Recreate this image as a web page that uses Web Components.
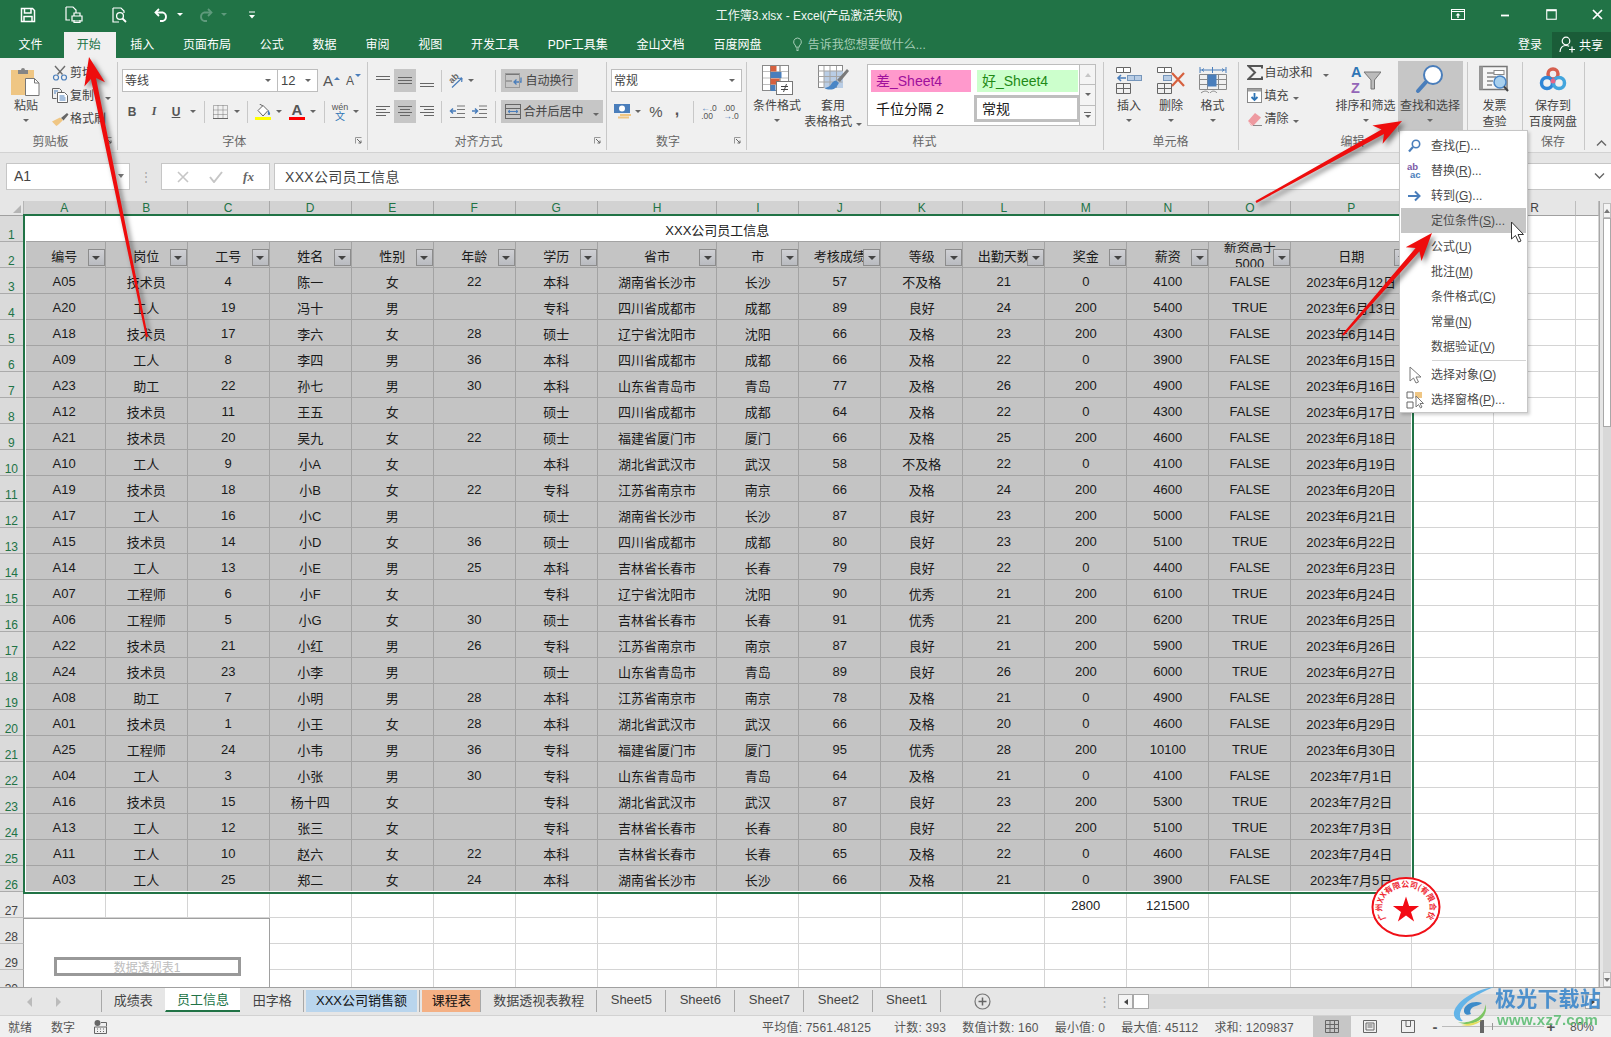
<!DOCTYPE html>
<html lang="zh-CN">
<head>
<meta charset="utf-8">
<title>工作簿3.xlsx - Excel</title>
<style>
  html, body { margin: 0; padding: 0; width: 1611px; height: 1037px; overflow: hidden; background: #f0f0f0; }
  body { font-family: "Liberation Sans", "Noto Sans CJK SC", sans-serif; font-size: 12px; color: #444; position: relative; }
</style>
</head>
<body>
<xl-titlebar></xl-titlebar>
<xl-tabs></xl-tabs>
<xl-ribbon></xl-ribbon>
<xl-formula></xl-formula>
<xl-sheet></xl-sheet>
<xl-sheettabs></xl-sheettabs>
<xl-status></xl-status>
<xl-stamp></xl-stamp>
<xl-menu></xl-menu>
<xl-watermark></xl-watermark>
<xl-arrows></xl-arrows>

<script>
const S = (w, h, b) => `<svg width="${w}" height="${h}" viewBox="0 0 ${w} ${h}" fill="none" style="display:block">${b}</svg>`;

const line = (x1, y1, x2, y2, c = "#666", sw = 1) => `<path d="M${x1} ${y1}L${x2} ${y2}" stroke="${c}" stroke-width="${sw}"/>`;
const hlines = (ys, c = "#666") => S(16, 16, ys.map(([y, a, b]) => line(a, y + .5, b, y + .5, c)).join(""));

const Icons = {
  save: S(16, 16, `<path d="M1.5 1.5h11l2 2v11h-13z" stroke="#fff" stroke-width="1.5"/><path d="M4.5 2v4h6.5V2M4 14.5V9.5h8v5" stroke="#fff" stroke-width="1.5"/>`),
  touch: S(18, 17, `<path d="M1 1h7l3 3v3M1 1v13h4" stroke="#fff" stroke-width="1.2"/><path d="M7 10h10v5H7zM9 10V7h6v3M9 14v2.5h6V14" stroke="#fff" stroke-width="1.2"/>`),
  preview: S(16, 16, `<path d="M1 1h8l3 3v2M1 1v14h6" stroke="#fff" stroke-width="1.2"/><circle cx="8" cy="9" r="3.4" stroke="#fff" stroke-width="1.3"/><path d="M10.5 11.5l3.5 3.5" stroke="#fff" stroke-width="1.8"/>`),
  undo: S(16, 14, `<path d="M5 1L1.5 4.5 5 8" stroke="#fff" stroke-width="1.8"/><path d="M2 4.5h7a4.5 4.5 0 0 1 0 8.5H6" stroke="#fff" stroke-width="1.8"/>`),
  redo: S(16, 14, `<path d="M11 1l3.5 3.5L11 8" stroke="#5f9a7c" stroke-width="1.8"/><path d="M14 4.5H7a4.5 4.5 0 0 0 0 8.5h3" stroke="#5f9a7c" stroke-width="1.8"/>`),
  custom: S(8, 8, `<path d="M1 1h6" stroke="#fff"/><path d="M1 4h6L4 7.500z" fill="#fff"/>`),
  ribOpt: S(14, 11, `<rect x=".5" y=".5" width="13" height="10" stroke="#fff"/><path d="M1 2.500h12" stroke="#fff"/><path d="M7 4l2.500 2.500h-5zM6.300 6h1.400v3H6.300z" fill="#fff"/>`),
  min: S(10, 10, `<path d="M1 5.500h8" stroke="#fff" stroke-width="1.8"/>`),
  max: S(11, 11, `<rect x=".75" y=".75" width="9.500" height="9.500" stroke="#fff" stroke-width="1.1"/><path d="M1 1.500h9" stroke="#fff" stroke-width="1.5"/>`),
  close: S(11, 11, `<path d="M1 1l9 9M10 1l-9 9" stroke="#fff" stroke-width="1.7"/>`),
  bulb: S(11, 14, `<path d="M5.500 1a4 4 0 0 0-2.500 7c.7.7.8 1.200.8 2.200h3.400c0-1 .1-1.500.8-2.200a4 4 0 0 0-2.500-7z" stroke="#a5cdb6"/><path d="M4 12h3M4.500 13.500h2" stroke="#a5cdb6"/>`),
  user: S(17, 17, `<circle cx="7" cy="5" r="3.800" stroke="#fff" stroke-width="1.200"/><path d="M1 16c.3-4.500 2.500-6.500 6-6.500 1.300 0 2.300.3 3.200.8" stroke="#fff" stroke-width="1.200"/><path d="M10 13.500h6M13 10.500v6" stroke="#fff" stroke-width="1.200"/>`),
  paste: S(30, 31, `<rect y="5" width="23" height="25" fill="#efc684"/><path d="M7 5h3a2 2 0 0 1 4 0h3v4H7z" fill="#858585"/><path d="M14.500 13.500h9l4.500 4.500v12.500H14.500z" fill="#fff" stroke="#777"/><path d="M23.500 13.500v4.500h4.500" stroke="#777"/>`),
  cut: S(16, 16, `<path d="M5.500 9.500L13 1M10.500 9.500L3 1" stroke="#6d6d6d" stroke-width="1.400"/><circle cx="4" cy="12.500" r="2.500" stroke="#4a7ebb" stroke-width="1.200"/><circle cx="12" cy="12.500" r="2.500" stroke="#4a7ebb" stroke-width="1.200"/>`),
  copy: S(16, 15, `<path d="M.5.5h7l2 2v2M.500.500v10h4" stroke="#666"/><path d="M5.500 4.500h7l3 3v7h-10z" fill="#fff" stroke="#666"/><path d="M7.500 8h5M7.500 10h6M7.500 12h6M2 3h4M2 5h2" stroke="#4a7ebb"/>`),
  brush: S(18, 14, `<path d="M10 6l6-5 1.500 1.500L12.500 8.500z" fill="#666"/><path d="M9 5.500L1 9.500c1.500 1.200 3.500 4 4.500 4.500 1.500-1 4.500-4 6.500-6z" fill="#efc684"/>`),
  border: S(15, 14, `<path d="M.5.5h14v13H.5zM5 .5v13M10 .5v13M.5 5h14M.5 9.500h14" stroke="#777" stroke-dasharray="1 1"/><path d="M0 13.500h15" stroke="#666"/>`),
  fill: S(16, 16, `<path d="M3 6.500L8 1.500l5 5-5 5.500z" fill="#fff" stroke="#666"/><path d="M8 2L4.500 0" stroke="#666"/><path d="M13 6c1.500 2 2.500 3 2 4.500-.8 1-2.500.5-2.200-1z" fill="#4a7ebb"/><rect y="13" width="16" height="3.500" fill="#ff0"/>`),
  orient: S(17, 17, `<text x="0" y="0" transform="translate(5 12) rotate(-45)" font-size="9" font-weight="700" fill="#666" font-family="Liberation Sans">ab</text><path d="M5 15.500L15 6M15 6l-4 .5M15 6l-.3 4" stroke="#4a7ebb" stroke-width="1.200"/>`),
  wrap: S(17, 16, `<path d="M1 1.500h14M1 8h6M1 14.500h6" stroke="#777"/><path d="M16 4.500v4.500h-7M11.500 6.500L9 9l2.500 2.500" stroke="#4a7ebb" stroke-width="1.300"/><rect x=".5" y=".5" width="14" height="14" stroke="#999"/>`),
  merge: S(16, 15, `<rect x=".5" y=".5" width="15" height="14" stroke="#666"/><path d="M1 4.500h14M1 10.500h14" stroke="#666"/><path d="M3 7.500h10M3 7.500l2-1.500M3 7.500l2 1.500M13 7.500l-2-1.500M13 7.500l-2 1.500" stroke="#4a7ebb"/>`),
  indentL: S(16, 14, `<path d="M8 1h8M8 4.500h8M8 8.500h8M1 12.500h15" stroke="#777"/><path d="M7 6H1.500M4 3.500L1.500 6 4 8.500" stroke="#4a7ebb" stroke-width="1.500"/>`),
  indentR: S(16, 14, `<path d="M8 1h8M8 4.500h8M8 8.500h8M1 12.500h15" stroke="#777"/><path d="M1 6h5.500M4 3.500L6.500 6 4 8.500" stroke="#4a7ebb" stroke-width="1.500"/>`),
  money: S(17, 17, `<rect y="1" width="16" height="9" fill="#4a7ebb"/><circle cx="8" cy="5.500" r="3" fill="#fff"/><rect x="6" y="11" width="11" height="2" fill="#efc684"/><rect x="4" y="13.500" width="11" height="2" fill="#efc684"/>`),
  cond: S(31, 30, `<rect x=".5" y=".5" width="26" height="25" fill="#fff" stroke="#8a8a8a"/><path d="M8.500 1v25M18 1v25M1 6.500h25M1 13h25M1 19.500h25" stroke="#bdbdbd"/><path d="M.5.5h26v25H.5zM8.500 1v25M18 1v25" stroke="#8a8a8a"/><rect x="8.500" y="1" width="6" height="5.500" fill="#d6603e"/><rect x="8.500" y="7" width="11" height="6" fill="#4a7ebb"/><rect x="8.500" y="13.500" width="9" height="6" fill="#d6603e"/><rect x="8.500" y="20" width="5" height="6" fill="#4a7ebb"/><rect x="14.500" y="16.500" width="16" height="13" fill="#fff" stroke="#777"/><path d="M19 21.500h7M19 24.500h7M24.500 19l-3 8" stroke="#444"/>`),
  table: S(31, 30, `<rect x=".5" y=".5" width="24" height="22" fill="#fff" stroke="#888"/><rect x="6" y="6" width="19" height="17" fill="#b9cde5"/><path d="M.5 6h24M.5 11.500h24M.5 17h24M6 1v22M12 1v22M18.500 1v22" stroke="#a5a5a5"/><path d="M29 4l2 2-9 11-3-2z" fill="#7a7a7a"/><path d="M18 15.500c-2.500.5-4 2-5 4-1 2-3.500 3-6.500 3.500 3 2.500 10 2 12-1 1.200-2 2-3.500 2.500-4z" fill="#4a86c6"/>`),
  insert: S(28, 28, `<path d="M1.500 1.500h7v5h-7zM8.500 1.500h7v5h-7z" fill="#fff" stroke="#666"/><rect x="12.500" y="9.500" width="7" height="5" fill="#b9cde5" stroke="#7696bb"/><rect x="19.500" y="9.500" width="7" height="5" fill="#b9cde5" stroke="#7696bb"/><path d="M11 12H3M6 9l-3 3 3 3" stroke="#4a7ebb" stroke-width="1.600"/><path d="M1.500 17.500h14v10h-14zM1.500 22.500h14M8.500 17.500v10" stroke="#666"/>`),
  del: S(30, 28, `<path d="M1.500 1.500h7v5h-7zM8.500 1.500h7v5h-7z" fill="#fff" stroke="#666"/><rect x="7.500" y="9.500" width="8" height="5" fill="#b9cde5" stroke="#7696bb"/><path d="M1.500 17.500h14v10h-14zM1.500 22.500h14M8.500 17.500v10" stroke="#666"/><path d="M16 7l12 13M28 7L16 20" stroke="#d6603e" stroke-width="2.200"/>`),
  format: S(28, 28, `<path d="M1 4h26M1 1v6M27 1v6M13.500 1v6" stroke="#4a7ebb"/><path d="M3 4l2-1.500M3 4l2 1.500M25 4l-2-1.500M25 4l-2 1.500" stroke="#4a7ebb"/><path d="M.5 8.500h27v15H.5zM8.500 8.500v15M19.500 8.500v15M.5 13.500h27M.5 18.500h27" stroke="#8a8a8a"/><rect x="8.500" y="8.500" width="9" height="12" fill="#4a7ebb"/><path d="M2 27c3-2.500 6-2.500 8 0M11 27c2-2.500 5-2.500 7 0" stroke="#888"/>`),
  sigma: S(16, 15, `<path d="M15 3.500V1H1.500l6.500 6.500L1.500 14H15v-2.500" stroke="#555" stroke-width="2"/>`),
  down: S(15, 15, `<rect x=".5" y=".5" width="14" height="14" fill="#fff" stroke="#888"/><rect x="1" y="1" width="13" height="2.500" fill="#a0a0a0"/><path d="M7.500 5v7M4.500 9l3 3 3-3" stroke="#2f75b5" stroke-width="1.800"/>`),
  eraser: S(15, 14, `<path d="M1 9l7-8 6 4.500-7.500 8H4z" fill="#ee9aa0"/><path d="M1 9l4.500 4.500" stroke="#f5c4c8"/><path d="M6 13.500h9" stroke="#888"/>`),
  sort: S(30, 30, `<text x="0" y="12" font-size="14.500" font-weight="700" fill="#2f75b5" font-family="Liberation Sans">A</text><text x="0" y="28" font-size="14.500" font-weight="700" fill="#9466b8" font-family="Liberation Sans">Z</text><path d="M13 7h17l-6.500 8v9h-3.500v-9z" fill="#bbb" stroke="#777"/>`),
  find: S(30, 30, `<circle cx="18" cy="10" r="9" fill="#fff" stroke="#4a7ebb" stroke-width="2"/><path d="M11 17L3 26" stroke="#4a7ebb" stroke-width="4" stroke-linecap="round"/>`),
  invoice: S(32, 30, `<rect x="1" y="1.500" width="27" height="23" fill="#f6f6f6" stroke="#777" stroke-width="1.500"/><path d="M1 1.500h3v23H1z" fill="#999"/><path d="M8 8h15M8 12h9M8 16h6M8 20h5" stroke="#888" stroke-width="1.300"/><rect x="15" y="5.500" width="10" height="4" fill="#fff" stroke="#888"/><circle cx="21" cy="17" r="6" fill="#a8d0ee" stroke="#4a86c6" stroke-width="1.500"/><path d="M25 21.500l4 4.500" stroke="#444" stroke-width="2"/>`),
  baidu: S(28, 26, `<circle cx="14" cy="7" r="5" stroke="#d6604f" stroke-width="3.500"/><circle cx="8" cy="16" r="5.500" stroke="#2f86d6" stroke-width="3.500"/><circle cx="20" cy="16" r="5.500" stroke="#43a5dd" stroke-width="3.500"/><circle cx="14" cy="14" r="2.500" fill="#e6688a"/>`),
  mSearch: S(15, 14, `<circle cx="9" cy="5" r="3.700" stroke="#4a7ebb" stroke-width="1.600"/><path d="M6 8L2 12.500" stroke="#4a7ebb" stroke-width="2.200"/>`),
  mGoto: S(15, 12, `<path d="M1 6h11M8 1.500L12.500 6 8 10.500" stroke="#4a7ebb" stroke-width="2"/>`),
  mPointer: S(14, 18, `<path d="M2 1v14l3.500-3 2.500 5 2.500-1-2.500-5h5z" fill="#fff" stroke="#777"/>`),
  mPane: S(18, 18, `<path d="M1 1h6v6H1zM1 11h6v6H1z" stroke="#666"/><rect x="9" y="1" width="7" height="6" fill="#efc684"/><path d="M10 5v11l2.500-2.500 2 3.500 1.500-1-2-3.500h3.500z" fill="#fff" stroke="#777"/>`),
  nextTab: S(6, 10, `<path d="M1 0l5 5-5 5z" fill="#bbb"/>`),
  prevTab: S(6, 10, `<path d="M5 0L0 5l5 5z" fill="#bbb"/>`),
  plus: S(17, 17, `<circle cx="8.500" cy="8.500" r="7.500" stroke="#777" stroke-width="1.200"/><path d="M4.500 8.500h8M8.500 4.500v8" stroke="#666" stroke-width="1.500"/>`),
  macro: S(13, 14, `<circle cx="3.500" cy="3" r="3" fill="#666"/><path d="M.5 7h12v6.500H.500zM7 2.500h5.500v4" stroke="#666"/><path d="M3 9h1M6 9h1M9 9h1M3 11.500h1M6 11.500h1M9 11.500h1" stroke="#666"/>`),
  vNormal: S(14, 13, `<path d="M.5.5h13v12H.5zM5 .5v12M9.500 .5v12M.5 4.500h13M.5 8.500h13" stroke="#666"/>`),
  vPage: S(14, 13, `<path d="M.5.5h13v12H.5zM3 3h8v7H3zM4.500 5h5M4.500 7h5" stroke="#666"/>`),
  vBreak: S(14, 13, `<path d="M.5.5h13v12H.5zM5 .5v6h4.500V.5" stroke="#666"/>`),
  chevUp: S(11, 6, `<path d="M1 5.500L5.500 1 10 5.500" stroke="#666" stroke-width="1.400"/>`),
  chevDown: S(11, 6, `<path d="M1 .5L5.500 5 10 .5" stroke="#666" stroke-width="1.400"/>`),
  launcher: S(7, 7, `<path d="M.5 6.500V.5h6" stroke="#999"/><path d="M2 2l4 4M6 3.500V6H3.500" stroke="#666"/>`),
};
const Align = {
  top: hlines([[3, 1, 15], [6, 1, 15]]),
  mid: hlines([[4, 1, 15], [7, 1, 15], [10, 1, 15]]),
  bot: hlines([[10, 1, 15], [13, 1, 15]]),
  left: hlines([[2, 1, 15], [5, 1, 11], [8, 1, 15], [11, 1, 11]]),
  center: hlines([[2, 1, 15], [5, 3, 13], [8, 1, 15], [11, 3, 13]]),
  right: hlines([[2, 1, 15], [5, 5, 15], [8, 1, 15], [11, 5, 15]]),
};

class XlTitlebar extends HTMLElement {
  constructor() {
    super();
    this.attachShadow({ mode: "open" }).innerHTML = `
      <style>
        :host { display: grid; grid-template-columns: 1fr auto 1fr; height: 32px; box-sizing: border-box; padding-bottom: 3px; background: #217346; color: #fff; align-items: center; overflow: hidden; }
        .qat, .win { display: flex; align-items: center; }
        .qat span, .win span { display: flex; align-items: center; justify-content: center; }
        .title { font-size: 12px; margin-left: 7px; color: #f2f7f4; }
        .win { justify-content: flex-end; margin-right: -10px; }
        .win span { width: 46.5px; height: 28px; }
        .car { width: 0; height: 0; border: 3px solid transparent; border-top: 3.5px solid #fff; border-bottom: 0; }
        .car.off { border-top-color: #5f9a7c; }
      </style>
      <div class="qat">
        <span style="margin-left:20px">${Icons.save}</span>
        <span style="margin-left:29px">${Icons.touch}</span>
        <span style="margin-left:29px">${Icons.preview}</span>
        <span style="margin-left:26px">${Icons.undo}</span>
        <span style="margin-left:7px"><i class="car"></i></span>
        <span style="margin-left:14px">${Icons.redo}</span>
        <span style="margin-left:8px"><i class="car off"></i></span>
        <span style="margin-left:21px">${Icons.custom}</span>
      </div>
      <div class="title">工作簿3.xlsx - Excel(产品激活失败)</div>
      <div class="win"><span>${Icons.ribOpt}</span><span>${Icons.min}</span><span>${Icons.max}</span><span>${Icons.close}</span></div>`;
  }
}

class XlTabs extends HTMLElement {
  constructor() {
    super();
    const names = ["文件", "开始", "插入", "页面布局", "公式", "数据", "审阅", "视图", "开发工具", "PDF工具集", "金山文档", "百度网盘"];
    this.attachShadow({ mode: "open" }).innerHTML = `
      <style>
        :host { display: flex; height: 26px; background: #217346; color: #fff; font-size: 12px; padding-left: 4px; align-items: stretch; }
        .t { padding: 0 14.4px 3px; display: flex; align-items: center; }
        .on { background: #f0f0f0; color: #217346; margin-left: 7px; padding: 0 15px 3px 13px; }
        .tell { display: flex; align-items: center; gap: 5px; margin-left: 16px; padding-bottom: 3px; color: #a5cdb6; }
        .end { margin-left: auto; display: flex; align-items: stretch; }
        .login { display: flex; align-items: center; margin-right: 10px; padding-bottom: 3px; }
        .share { width: 59px; background: #1a5c38; display: flex; align-items: center; gap: 3px; padding: 0 0 2px 7px; box-sizing: border-box; }
      </style>
      ${names.map((n, i) => `<div class="t ${i == 1 ? "on" : ""}">${n}</div>`).join("")}
      <div class="tell">${Icons.bulb}<span>告诉我您想要做什么...</span></div>
      <div class="end"><div class="login">登录</div><div class="share">${Icons.user}<span>共享</span></div></div>`;
  }
}

class XlGroup extends HTMLElement {
  constructor() {
    super();
    const launch = this.hasAttribute("launch");
    this.attachShadow({ mode: "open" }).innerHTML = `
      <style>
        :host { display: block; flex: none; width: var(--w); height: 88px; box-sizing: border-box; border-right: 1px solid #c8c8c8; }
        .body { height: 70px; display: flex; padding-left: var(--p, 0); box-sizing: border-box; }
        .lab { height: 16px; display: grid; grid-template-columns: 1fr auto 1fr; align-items: center; color: #666; font-size: 12px; }
        .name { padding-right: ${launch ? 16 : 0}px; }
        .lau { justify-self: end; margin-right: 5px; }
      </style>
      <div class="body"><slot></slot></div>
      <div class="lab"><span></span><span class="name">${this.getAttribute("label") || ""}</span>
      <span class="lau">${launch ? Icons.launcher : ""}</span></div>`;
  }
}

const car = `<i class="car"></i>`;
const k = (w, c = "", cls = "") => `<span class="k ${cls}" style="width:${w}px">${c}</span>`;
const sep = w => `<span class="k sep" style="width:${w}px"></span>`;
const big = (w, icon, lines, caret = true) => `<div class="big" style="width:${w}px"><div class="ico">${icon}</div>${lines.map(l => `<div class="t">${l}</div>`).join("")}${caret ? `<div class="bc">${car}</div>` : ""}</div>`;

class XlRibbon extends HTMLElement {
  constructor() {
    super();
    this.attachShadow({ mode: "open" }).innerHTML = `
      <style>
        :host { display: flex; height: 94px; padding-top: 4px; box-sizing: border-box; background: #f0f0f0; color: #444; font-size: 12px; white-space: nowrap; }
        .col { display: flex; flex-direction: column; }
        .r { display: flex; align-items: center; height: 23px; }
        .k { display: inline-flex; align-items: center; justify-content: center; height: 23px; flex: none; }
        .sep { background: linear-gradient(#c8c8c8, #c8c8c8) center / 1px 22px no-repeat; }
        .sel { background: #c6c6c6; }
        .lb { padding-bottom: 2px; }
        .car { display: inline-block; width: 0; height: 0; border: 3px solid transparent; border-top: 3.5px solid #666; border-bottom: 0; }
        .big { display: flex; flex-direction: column; align-items: center; height: 70px; flex: none; }
        .ico { height: 36px; display: flex; align-items: center; justify-content: center; }
        .t { line-height: 16px; height: 16px; }
        .bc { height: 12px; display: flex; align-items: center; }
        .sm { height: 23px; display: flex; align-items: center; }
        .box { background: #fff; border: 1px solid #bdbdbd; box-sizing: border-box; height: 23px; display: flex; align-items: center; justify-content: space-between; padding: 0 6px 0 2px; color: #444; font-size: 12px; }
        .gal { width: 229px; height: 62px; margin: 2px 0 0 4px; display: flex; border: 1px solid #bdbdbd; box-sizing: border-box; background: #fff; font-size: 14px; }
        .cells { width: 211px; display: grid; grid-template-columns: 100px 106px; column-gap: 3px; padding: 5px 0 0 3px; grid-template-rows: 22px 26px; row-gap: 4px; box-sizing: border-box; }
        .cells div { display: flex; align-items: center; padding: 0 0 2px 5px; box-sizing: border-box; }
        .bad { background: #ff99cc; color: #a0109c; }
        .good { background: #ccffcc; color: #1f8a16; margin: 0 2px 0 3px; }
        .normal { border: 3px solid #bfbfbf; color: #222; margin-top: -1px; height: 27px; }
        .comma { color: #111; }
        .scr { flex: 1; display: flex; flex-direction: column; border-left: 1px solid #bdbdbd; background: #f4f4f4; }
        .scr span { flex: 1; display: flex; align-items: center; justify-content: center; border-bottom: 1px solid #bdbdbd; }
        .scr span:last-child { border: 0; }
        .up { width: 0; height: 0; border: 3.5px solid transparent; border-bottom: 4px solid #c6c6c6; border-top: 0; }
        .more { width: 7px; border-top: 1px solid #666; padding-top: 2px; display: flex; justify-content: center; }
        .end { flex: 1; display: flex; align-items: flex-end; justify-content: flex-end; padding: 0 4px 6px 0; }
      </style>

      <xl-group label="剪贴板" launch style="--w:118px;--p:4px">
        ${big(44, Icons.paste, ["粘贴"])}
        <div class="col" style="margin-top:-1px;margin-left:3px">
          <div class="sm">${k(18, Icons.cut)}<span class="lb" style="margin-left:1px">剪切</span></div>
          <div class="sm">${k(18, Icons.copy)}<span class="lb" style="margin-left:1px">复制</span><span style="margin-left:11px">${car}</span></div>
          <div class="sm">${k(18, Icons.brush)}<span class="lb" style="margin-left:1px">格式刷</span></div>
        </div>
      </xl-group>

      <xl-group label="字体" launch style="--w:249.5px;--p:4px">
        <div class="col" style="padding-top:7px;gap:8px">
          <div class="r">
            <div class="box" style="width:156px"><span class="lb">等线</span>${car}</div>
            <div class="box" style="width:41px;margin-left:-1px;padding-left:3px;font-size:13px">12${car}</div>
            ${k(27, `<span style="font-size:15px;color:#555">A</span><sup style="border:3px solid transparent;border-bottom:3.5px solid #4a7ebb;margin:-8px 0 0 1px"></sup>`)}
            ${k(17, `<span style="font-size:12px;color:#555">A</span><sup style="border:3px solid transparent;border-top:3.5px solid #4a7ebb;margin:-8px 0 0 1px"></sup>`)}
          </div>
          <div class="r">
            ${k(20, `<b style="font-size:12px;color:#555">B</b>`)}${k(2)}${k(20, `<i style="font:italic 700 12px 'Liberation Serif',serif;color:#555">I</i>`)}${k(2)}
            ${k(20, `<u style="font-size:12px;font-weight:700;color:#555">U</u>`)}${k(14, car)}${sep(8)}
            ${k(24, Icons.border)}${k(10, car)}${sep(10)}${k(22, Icons.fill)}${k(10, car)}${k(2)}
            ${k(22, `<span style="display:flex;flex-direction:column;align-items:center"><span style="font-size:15px;line-height:13px;color:#555;font-weight:700">A</span><span style="width:16px;height:3.5px;background:#f00;margin-top:1px"></span></span>`)}${k(10, car)}${sep(12)}
            ${k(20, `<span style="display:flex;flex-direction:column;align-items:center;font-size:9px;line-height:9px;color:#555">wén<span style="color:#2f75b5;font-size:10px">文</span></span>`)}${k(12, car)}
          </div>
        </div>
      </xl-group>

      <xl-group label="对齐方式" launch style="--w:239px;--p:4px">
        <div class="col" style="padding-top:7px;gap:8px">
          <div class="r">
            ${k(22, Align.top)}${k(22, Align.mid, "sel")}${k(22, Align.bot)}${sep(8)}${k(20, Icons.orient)}${k(10, car)}${k(14)}${sep(11)}
            <span class="k sel" style="width:77px;justify-content:flex-start;padding-left:4px;box-sizing:border-box;gap:4px">${Icons.wrap}<span class="lb">自动换行</span></span>
          </div>
          <div class="r">
            ${k(22, Align.left)}${k(22, Align.center, "sel")}${k(22, Align.right)}${sep(8)}${k(22, Icons.indentL)}${k(22, Icons.indentR)}${sep(11)}
            <span class="k sel" style="width:102px;justify-content:flex-start;padding-left:4px;box-sizing:border-box;gap:3px">${Icons.merge}<span class="lb">合并后居中</span><span style="margin-left:6px">${car}</span></span>
          </div>
        </div>
      </xl-group>

      <xl-group label="数字" launch style="--w:140px;--p:4.500px">
        <div class="col" style="padding-top:7px;gap:8px">
          <div class="r"><div class="box" style="width:131px"><span class="lb">常规</span>${car}</div></div>
          <div class="r">
            ${k(22, Icons.money)}${k(10, car)}${k(2)}${k(22, `<span style="font-size:15px;color:#555">%</span>`)}${k(20, `<b style="font-size:16px;color:#555;margin-top:-4px">,</b>`)}${sep(12)}
            ${k(20, `<span style="font-size:8.500px;line-height:8px;color:#555"><span style="color:#4a7ebb">←</span>.0<br>.00</span>`)}${k(2)}
            ${k(20, `<span style="font-size:8.500px;line-height:8px;color:#555">.00<br><span style="color:#4a7ebb">→</span>.0</span>`)}
          </div>
        </div>
      </xl-group>

      <xl-group label="样式" style="--w:357px;--p:4.500px">
        ${big(52, Icons.cond, ["条件格式"])}
        ${big(60, Icons.table, ["套用", `表格格式 ${car}`], false)}
        <div class="gal">
          <div class="cells">
            <div class="bad">差_Sheet4</div><div class="good">好_Sheet4</div>
            <div class="comma">千位分隔 2</div><div class="normal">常规</div>
          </div>
          <div class="scr"><span><i class="up"></i></span><span>${car}</span><span><i class="more">${car}</i></span></div>
        </div>
      </xl-group>

      <xl-group label="单元格" style="--w:135px;--p:4.500px">
        ${big(42, Icons.insert, ["插入"])}${big(42, Icons.del, ["删除"])}${big(41, Icons.format, ["格式"])}
      </xl-group>

      <xl-group label="编辑" style="--w:229px;--p:7px">
        <div class="col" style="margin-top:-1px;width:88px">
          <div class="sm">${k(18, Icons.sigma)}<span class="lb" style="margin-left:1px">自动求和</span><span style="margin-left:10px">${car}</span></div>
          <div class="sm">${k(18, Icons.down)}<span class="lb" style="margin-left:1px">填充</span><span style="margin-left:4px">${car}</span></div>
          <div class="sm">${k(18, Icons.eraser)}<span class="lb" style="margin-left:1px">清除</span><span style="margin-left:4px">${car}</span></div>
        </div>
        ${big(64, Icons.sort, ["排序和筛选"])}
        <div class="big sel" style="width:65px;height:71px;margin:-1px 0 0 0"><div class="ico" style="height:37px">${Icons.find}</div><div class="t">查找和选择</div><div class="bc">${car}</div></div>
      </xl-group>

      <xl-group style="--w:55px">${big(54, Icons.invoice, ["发票", "查验"], false)}</xl-group>
      <xl-group label="保存" style="--w:62px">${big(61, Icons.baidu, ["保存到", "百度网盘"], false)}</xl-group>
      <div class="end">${Icons.chevUp}</div>`;
  }
}

class XlFormula extends HTMLElement {
  constructor() {
    super();
    this.attachShadow({ mode: "open" }).innerHTML = `
      <style>
        :host { display: flex; height: 49px; box-sizing: border-box; background: #e6e6e6; border-top: 1px solid #d2d2d2; padding: 10px 0 11px 6px; color: #444; }
        .f { background: #fff; border: 1px solid #c6c6c6; box-sizing: border-box; display: flex; align-items: center; height: 27px; }
        .name { width: 124px; padding: 0 5px 2px 7px; justify-content: space-between; font-size: 14px; }
        .dots { width: 31px; display: flex; justify-content: center; align-items: center; color: #a8a8a8; font-size: 12px; line-height: 4px; }
        .btns { width: 109px; justify-content: space-around; padding: 0 4px; }
        .btns span { width: 24px; text-align: center; display: flex; justify-content: center; }
        .input { flex: 1; margin-left: 4px; padding: 0 6px 2px 10px; font-size: 14px; letter-spacing: .3px; justify-content: space-between; border-right: 0; }
        .car { width: 0; height: 0; border: 3.5px solid transparent; border-top: 4px solid #777; border-bottom: 0; }
      </style>
      <div class="f name"><span>A1</span><i class="car"></i></div>
      <div class="dots"><span>⋮</span></div>
      <div class="f btns">
        <span>${S(12, 12, `<path d="M1 1l10 10M11 1L1 11" stroke="#c6c6c6" stroke-width="1.600"/>`)}</span>
        <span>${S(14, 12, `<path d="M1 6l4 5 8-10" stroke="#c6c6c6" stroke-width="2"/>`)}</span>
        <span style="font:italic 700 13px 'Liberation Serif',serif;color:#666">fx</span>
      </div>
      <div class="f input"><span>XXX公司员工信息</span>${Icons.chevDown}</div>`;
  }
}

const COLW = [23.67, 82, 82, 82, 82, 82, 82, 82, 119.67, 82, 82, 82, 82, 82, 82, 82, 120.67, 82, 82, 23];
const LETTERS = "ABCDEFGHIJKLMNOPQR ".split("");
const HEAD = ["编号", "岗位", "工号", "姓名", "性别", "年龄", "学历", "省市", "市", "考核成绩", "等级", "出勤天数", "奖金", "薪资", "薪资高于<br>5000", "日期"];
const DATA = `A05 技术员 4 陈一 女 22 本科 湖南省长沙市 长沙 57 不及格 21 0 4100 FALSE
A20 工人 19 冯十 男 - 专科 四川省成都市 成都 89 良好 24 200 5400 TRUE
A18 技术员 17 李六 女 28 硕士 辽宁省沈阳市 沈阳 66 及格 23 200 4300 FALSE
A09 工人 8 李四 男 36 本科 四川省成都市 成都 66 及格 22 0 3900 FALSE
A23 助工 22 孙七 男 30 本科 山东省青岛市 青岛 77 及格 26 200 4900 FALSE
A12 技术员 11 王五 女 - 硕士 四川省成都市 成都 64 及格 22 0 4300 FALSE
A21 技术员 20 吴九 女 22 硕士 福建省厦门市 厦门 66 及格 25 200 4600 FALSE
A10 工人 9 小A 女 - 本科 湖北省武汉市 武汉 58 不及格 22 0 4100 FALSE
A19 技术员 18 小B 女 22 专科 江苏省南京市 南京 66 及格 24 200 4600 FALSE
A17 工人 16 小C 男 - 硕士 湖南省长沙市 长沙 87 良好 23 200 5000 FALSE
A15 技术员 14 小D 女 36 硕士 四川省成都市 成都 80 良好 23 200 5100 TRUE
A14 工人 13 小E 男 25 本科 吉林省长春市 长春 79 良好 22 0 4400 FALSE
A07 工程师 6 小F 女 - 专科 辽宁省沈阳市 沈阳 90 优秀 21 200 6100 TRUE
A06 工程师 5 小G 女 30 硕士 吉林省长春市 长春 91 优秀 21 200 6200 TRUE
A22 技术员 21 小红 男 26 专科 江苏省南京市 南京 87 良好 21 200 5900 TRUE
A24 技术员 23 小李 男 - 硕士 山东省青岛市 青岛 89 良好 26 200 6000 TRUE
A08 助工 7 小明 男 28 本科 江苏省南京市 南京 78 及格 21 0 4900 FALSE
A01 技术员 1 小王 女 28 本科 湖北省武汉市 武汉 66 及格 20 0 4600 FALSE
A25 工程师 24 小韦 男 36 专科 福建省厦门市 厦门 95 优秀 28 200 10100 TRUE
A04 工人 3 小张 男 30 专科 山东省青岛市 青岛 64 及格 21 0 4100 FALSE
A16 技术员 15 杨十四 女 - 专科 湖北省武汉市 武汉 87 良好 23 200 5300 TRUE
A13 工人 12 张三 女 - 专科 吉林省长春市 长春 80 良好 22 200 5100 TRUE
A11 工人 10 赵六 女 22 本科 吉林省长春市 长春 65 及格 22 0 4600 FALSE
A03 工人 25 郑二 女 24 本科 湖南省长沙市 长沙 66 及格 21 0 3900 FALSE`.split("\n").map(r => r.split(" ").map(v => v == "-" ? "" : v));

class XlSheet extends HTMLElement {
  constructor() {
    super();
    // every cell gets its own grid line, the selection frame and the pivot box share those tracks
    const at = (r, c, span = 1) => `grid-row:${r + 1};grid-column:${c + 2} / span ${span}`;
    let h = `<div class="corner" style="grid-row:1;grid-column:1"><i></i></div>`;
    LETTERS.forEach((l, i) => h += `<div class="ch ${i < 16 ? "on" : ""}" style="${at(0, i)}">${l}</div>`);

    for (let r = 1; r <= 30; r++) {
      h += `<div class="rh ${r <= 26 ? "on" : ""}" style="grid-row:${r + 1};grid-column:1">${r}</div>`;
      if (r == 1) {
        h += `<div class="c" style="${at(r, 0, 16)};border-color:#a3a3a3">XXX公司员工信息</div>`;
        for (let i = 16; i < 19; i++) h += `<div class="c" style="${at(r, i)}"></div>`;
        continue;
      }
      for (let i = 0; i < 19; i++) {
        if (r >= 28 && i < 3) continue;
        let v = "", on = r <= 26 && i < 16, extra = "";
        if (r == 2 && i < 16) {
          v = HEAD[i];
          if (i == 14) v = `<span class="wrap">${v}</span>`;
          extra = `<b class="fb"><i></i></b>`;
        } else if (r >= 3 && r <= 26 && i < 16) {
          const d = r - 3;
          v = i == 15 ? (d < 19 ? `2023年6月${12 + d}日` : `2023年7月${d - 18}日`) : DATA[d][i];
        } else if (r == 27 && i == 12) v = "2800";
        else if (r == 27 && i == 13) v = "121500";
        h += `<div class="c ${on ? "s" : ""}" style="${at(r, i)}">${v}${extra}</div>`;
      }
    }

    this.attachShadow({ mode: "open" }).innerHTML = `
      <style>
        :host { display: flex; height: 786px; overflow: hidden; background: #e6e6e6; }
        .grid { width: 1599px; height: 786px; overflow: hidden; display: grid; grid-template-columns: ${COLW.map(w => w + "px").join(" ")}; grid-template-rows: 15.33px repeat(30, 26px); background: #fff; font-size: 13px; color: #222; border-right: 1px solid #a8a8a8; box-sizing: content-box; }
        .corner { background: #e6e6e6; border-right: 1px solid #b5b5b5; border-bottom: 1px solid #a0a0a0; box-sizing: border-box; display: flex; align-items: flex-end; justify-content: flex-end; padding: 0 2px 2px 0; }
        .corner i { width: 0; height: 0; border-style: solid; border-width: 0 0 8px 8px; border-color: transparent transparent #b5b5b5 transparent; }
        .ch, .rh { background: #e6e6e6; box-sizing: border-box; font-size: 12px; color: #444; display: flex; justify-content: center; }
        .ch { align-items: center; border-right: 1px solid #bdbdbd; border-bottom: 1px solid #a0a0a0; line-height: 15px; }
        .ch.on { background: #d2d2d2; color: #217346; border-right-color: #a8a8a8; border-bottom-color: #217346; }
        .rh { align-items: flex-end; border-bottom: 1px solid #bdbdbd; border-right: 1px solid #a0a0a0; line-height: 12px; }
        .rh.on { background: #dadada; color: #217346; border-bottom-color: #ababab; border-right-color: #217346; }
        .c { box-sizing: border-box; padding-top: 1px; border-right: 1px solid #d4d4d4; border-bottom: 1px solid #d4d4d4; display: flex; align-items: center; justify-content: center; white-space: nowrap; overflow: hidden; position: relative; }
        .c.s { background: #c4c4c4; border-color: #a3a3a3; color: #1a1a1a; }
        .wrap { text-align: center; line-height: 17px; }
        .fb { position: absolute; right: 0; bottom: 1px; width: 17px; height: 17px; box-sizing: border-box; border: 1px solid #8c8c8c; background: linear-gradient(#cfd0d4, #b9bbc0); display: flex; align-items: center; justify-content: center; }
        .fb i { width: 0; height: 0; border: 4px solid transparent; border-top: 4px solid #444; border-bottom: 0; }
        .sel { grid-column: 2 / 18; grid-row: 2 / 28; margin: -2px -2px -2px -1px; border: 2px solid #217346; box-shadow: inset 0 0 0 1px #fff; pointer-events: none; z-index: 2; }
        .pivot { grid-column: 2 / 5; grid-row: 29 / 32; background: #fff; border-top: 1px solid #a0a0a0; border-right: 1px solid #a0a0a0; box-sizing: border-box; padding: 38px 0 0 30px; z-index: 1; }
        .pivot div { width: 187px; height: 19px; border: 3px solid #999; box-sizing: border-box; color: #bdbdbd; font-size: 12px; display: flex; align-items: center; justify-content: center; }
        .v { flex: 1; padding-left: 3px; display: flex; flex-direction: column; margin-top: 2px; }
        .v > * { flex: none; }
        .btn { height: 15px; border: 1px solid #bdbdbd; background: #f4f4f4; box-sizing: border-box; display: flex; align-items: center; justify-content: center; }
        .thumb { height: 209px; background: #fff; border: 1px solid #a8a8a8; box-sizing: border-box; }
        .track { flex: 1; background: #d8d8d8; }
        .up, .dn { width: 0; height: 0; border: 3px solid transparent; }
        .up { border-bottom: 4px solid #777; border-top: 0; }
        .dn { border-top: 4px solid #777; border-bottom: 0; }
      </style>
      <div class="grid">${h}<div class="sel"></div><div class="pivot"><div>数据透视表1</div></div></div>
      <div class="v"><div class="btn"><i class="up"></i></div><div class="thumb"></div><div class="track" style="flex:1"></div><div class="btn"><i class="dn"></i></div></div>`;
  }
}

class XlSheettabs extends HTMLElement {
  constructor() {
    super();
    const tabs = [["成绩表", 63.6], ["员工信息", 75.8, "on"], ["田字格", 62.6], ["XXX公司销售额", 116.4, "blue"], ["课程表", 61, "orange"], ["数据透视表教程", 116], ["Sheet5", 68.9], ["Sheet6", 69.1], ["Sheet7", 69.1], ["Sheet2", 69], ["Sheet1", 67.4]];
    this.attachShadow({ mode: "open" }).innerHTML = `
      <style>
        :host { display: flex; height: 28px; box-sizing: border-box; background: #e6e6e6; border-top: 1px solid #a0a0a0; font-size: 13px; color: #444; white-space: nowrap; }
        .nav { width: 101px; display: flex; align-items: center; gap: 22px; padding-left: 27px; box-sizing: border-box; }
        .tabs { display: flex; }
        .t { box-sizing: border-box; height: 22px; margin-top: 2px; display: flex; align-items: center; justify-content: center; border-left: 1px solid #a8a8a8; }
        .t > span { display: flex; align-items: center; justify-content: center; height: 22px; padding-bottom: 4px; box-sizing: border-box; }
        .t.on, .t.on + .t { border-left-color: transparent; }
        .t.on { background: #fff; color: #217346; border-bottom: 2px solid #217346; height: 24px; margin-top: 0; }
        .t.on > span { padding-bottom: 2px; }
        .t.blue, .t.orange { justify-content: flex-start; }
        .t.blue > span { background: #b9d5ed; color: #111; width: 111px; margin-left: 2px; }
        .t.orange > span { background: #f4b084; color: #111; width: 58px; margin-left: 2px; }
        .add { display: flex; align-items: center; border-left: 1px solid #a8a8a8; padding-left: 33px; height: 22px; margin-top: 2px; }
        .h { margin-left: auto; width: 516px; display: flex; align-items: center; }
        .dots { width: 18px; color: #a8a8a8; text-align: center; font-size: 13px; margin-right: 5px; }
        .h .b { width: 15px; height: 15px; background: #f4f4f4; border: 1px solid #a8a8a8; box-sizing: border-box; display: flex; align-items: center; justify-content: center; flex: none; }
        .h .th { width: 16px; height: 15px; background: #fff; border: 1px solid #a8a8a8; box-sizing: border-box; flex: none; }
        .h .tr { flex: 1; height: 15px; background: #d8d8d8; }
        .end { width: 11px; }
        .l, .rr { width: 0; height: 0; border: 3px solid transparent; }
        .l { border-right: 4px solid #444; border-left: 0; }
        .rr { border-left: 4px solid #444; border-right: 0; }
      </style>
      <div class="nav">${Icons.prevTab}${Icons.nextTab}</div>
      <div class="tabs">${tabs.map(([n, w, c]) => `<div class="t ${c || ""}" style="width:${w}px"><span>${n}</span></div>`).join("")}</div>
      <div class="add">${Icons.plus}</div>
      <div class="h"><span class="dots">⋮</span><div class="b"><i class="l"></i></div><div class="th"></div><div class="tr"></div><div class="b"><i class="rr"></i></div><div class="end"></div></div>`;
  }
}

class XlStatus extends HTMLElement {
  constructor() {
    super();
    this.attachShadow({ mode: "open" }).innerHTML = `
      <style>
        :host { display: flex; height: 22px; box-sizing: border-box; background: #f0f0f0; border-top: 1px solid #d2d2d2; align-items: stretch; font-size: 12px; color: #555; padding-left: 8px; white-space: nowrap; }
        .left, .stats, .view, .zoom { display: flex; align-items: center; }
        .left { gap: 19px; }
        .stats { margin-left: auto; gap: 16px; letter-spacing: .2px; }
        .stats span:first-child { margin-right: 7px; }
        .view { margin-left: 19px; }
        .view span { width: 38px; height: 100%; display: flex; align-items: center; justify-content: center; }
        .view .on { background: #c6c6c6; }
        .zoom { width: 184px; }
        .pm { width: 16px; font-weight: 700; font-size: 15px; text-align: center; }
        .bar { width: 102px; height: 1px; background: #bbb; position: relative; margin: 0 -1px; }
        .bar b { position: absolute; left: 38px; top: -6px; width: 4px; height: 13px; background: #666; }
        .bar i { position: absolute; left: 50px; top: -3px; width: 1px; height: 7px; background: #999; }
      </style>
      <div class="left"><span>就绪</span><span>数字</span>${Icons.macro}</div>
      <div class="stats"><span>平均值: 7561.48125</span><span>计数: 393</span><span>数值计数: 160</span><span>最小值: 0</span><span>最大值: 45112</span><span>求和: 1209837</span></div>
      <div class="view"><span class="on">${Icons.vNormal}</span><span>${Icons.vPage}</span><span>${Icons.vBreak}</span></div>
      <div class="zoom"><span class="pm">-</span><div class="bar"><b></b><i></i></div><span class="pm">+</span><span style="margin-left:11px">80%</span></div>`;
  }
}

class XlMenu extends HTMLElement {
  constructor() {
    super();
    const item = (ic, t, u, dots = "", cls = "", style = "") => `<div class="m ${cls}" style="${style}"><span class="i">${ic}</span><span class="x">${t}(<u>${u}</u>)${dots}</span></div>`;
    const abac = `<svg width="17" height="17" viewBox="0 0 17 17"><text x="1" y="8" font-size="9.500" font-weight="700" fill="#7b5aa6" font-family="Liberation Sans">ab</text><text x="4" y="16" font-size="9.500" font-weight="700" fill="#4a7ebb" font-family="Liberation Sans">ac</text></svg>`;
    this.attachShadow({ mode: "open" }).innerHTML = `
      <style>
        :host { position: absolute; left: 1399px; top: 130px; width: 129px; height: 283px; box-sizing: border-box; background: #fff; border: 1px solid #c6c6c6; box-shadow: 2px 2px 3px rgba(0,0,0,.18); padding: 2px 1px 0; font-size: 12px; color: #4a4a4a; white-space: nowrap; z-index: 5; }
        .m { height: 25px; display: flex; align-items: center; }
        .i { width: 30px; display: flex; justify-content: center; padding-right: 3px; box-sizing: border-box; flex: none; }
        .x { padding-bottom: 3px; }
        .hi { background: #c6c6c6; }
        hr { border: 0; border-top: 1px solid #d4d4d4; margin: 0 0 1.500px 31px; height: 0; }
      </style>
      ${item(Icons.mSearch, "查找", "F", "...")}
      ${item(abac, "替换", "R", "...")}
      ${item(Icons.mGoto, "转到", "G", "...")}
      ${item("", "定位条件", "S", "...", "hi")}
      ${item("", "公式", "U", "", "", "margin-top:1.500px")}
      ${item("", "批注", "M")}
      ${item("", "条件格式", "C")}
      ${item("", "常量", "N")}
      ${item("", "数据验证", "V")}
      <hr>
      ${item(Icons.mPointer, "选择对象", "O")}
      ${item(Icons.mPane, "选择窗格", "P", "...")}`;
  }
}

class XlStamp extends HTMLElement {
  constructor() {
    super();
    this.attachShadow({ mode: "open" }).innerHTML = `
      <style>
        :host { position: absolute; left: 1370px; top: 875px; width: 72px; height: 64px; z-index: 3; }
      </style>
      <svg width="72" height="64" viewBox="0 0 72 64">
        <ellipse cx="36" cy="32" rx="33.500" ry="29" fill="#fff" stroke="#f01018" stroke-width="2"/>
        <path id="arc" d="M16.300 43.500A24 20 0 1 1 55.700 43.500" fill="none"/>
        <text font-size="8" font-weight="700" fill="#ee2a34" font-family="Noto Sans CJK SC, sans-serif"><textPath href="#arc" textLength="96" lengthAdjust="spacingAndGlyphs">广州XX有限公司(有限合伙)</textPath></text>
        <path d="M36 21.500l3.100 9.500h10l-8.100 5.900 3.100 9.600-8.100-5.900-8.100 5.900 3.100-9.600-8.100-5.900h10z" fill="#f30a14"/>
      </svg>`;
  }
}

class XlWatermark extends HTMLElement {
  constructor() {
    super();
    this.attachShadow({ mode: "open" }).innerHTML = `
      <style>
        :host { position: absolute; left: 1452px; top: 986px; width: 152px; height: 42px; display: flex; z-index: 6; pointer-events: none; }
        .txt { display: flex; flex-direction: column; margin-left: 1px; }
        .a { font: 700 21px/22px "Noto Sans CJK SC", sans-serif; color: #3d88cb; letter-spacing: .2px; opacity: .9; }
        .b { font: 700 15px/16px "Liberation Sans", sans-serif; color: #57bb6e; margin: 4px 0 0 2px; opacity: .85; letter-spacing: .3px; }
      </style>
      <svg width="42" height="42" viewBox="0 0 42 42" style="flex:none">
        <path d="M42 1C25 3 5 14 2 26c-1 6 4 10 9 9C5 31 8 21 18 14 26 8 34 4 42 1z" fill="#63b4e8"/>
        <path d="M30 17c-8-3-17 1-18 7-.5 4 3 6 7 4-2-3 0-7 5-8 3-1 5-2 6-3z" fill="#3d8bc9"/>
        <path d="M33 18c1 7-5 14-14 17-5 1.500-9 2-13 1 8 4 19 2 25-5 3-4 4-9 2-13z" fill="#7dc563"/>
        <path d="M9 39c7 2 16 0 21-5-5 2-13 4-21 5z" fill="#e5de5c"/>
      </svg>
      <div class="txt"><div class="a">极光下载站</div><div class="b">www.xz7.com</div></div>`;
  }
}

class XlArrows extends HTMLElement {
  constructor() {
    super();
    const arrow = (tx, ty, px, py) => {
      const L = Math.hypot(px - tx, py - ty), ux = (px - tx) / L, uy = (py - ty) / L, nx = -uy, ny = ux;
      const at = (d, w) => `${(px - ux * d + nx * w).toFixed(1)},${(py - uy * d + ny * w).toFixed(1)}`;
      return `<polygon points="${at(L, -1)} ${at(22, -2.6)} ${at(28, -10.5)} ${px},${py} ${at(28, 10.5)} ${at(22, 2.6)} ${at(L, 1)}" fill="#ee0d0d"/>`;
    };
    this.attachShadow({ mode: "open" }).innerHTML = `
      <style>
        :host { position: absolute; left: 0; top: 0; width: 1611px; height: 1037px; pointer-events: none; z-index: 7; }
        svg { display: block; }
        g { filter: drop-shadow(3px 3px 2.500px rgba(0,0,0,.5)); }
      </style>
      <svg width="1611" height="1037" viewBox="0 0 1611 1037">
        <g>${arrow(147, 337, 89, 57)}${arrow(1256, 202, 1402, 121)}${arrow(1343, 335, 1432, 233)}</g>
        <path d="M1511.500 222v17l4-3.500 3 6.500 2.500-1-3-6.500h5.500z" fill="#fff" stroke="#333"/>
      </svg>`;
  }
}

customElements.define("xl-titlebar", XlTitlebar);
customElements.define("xl-tabs", XlTabs);
customElements.define("xl-group", XlGroup);
customElements.define("xl-ribbon", XlRibbon);
customElements.define("xl-formula", XlFormula);
customElements.define("xl-sheet", XlSheet);
customElements.define("xl-sheettabs", XlSheettabs);
customElements.define("xl-status", XlStatus);
customElements.define("xl-menu", XlMenu);
customElements.define("xl-stamp", XlStamp);
customElements.define("xl-watermark", XlWatermark);
customElements.define("xl-arrows", XlArrows);
</script>
</body>
</html>
